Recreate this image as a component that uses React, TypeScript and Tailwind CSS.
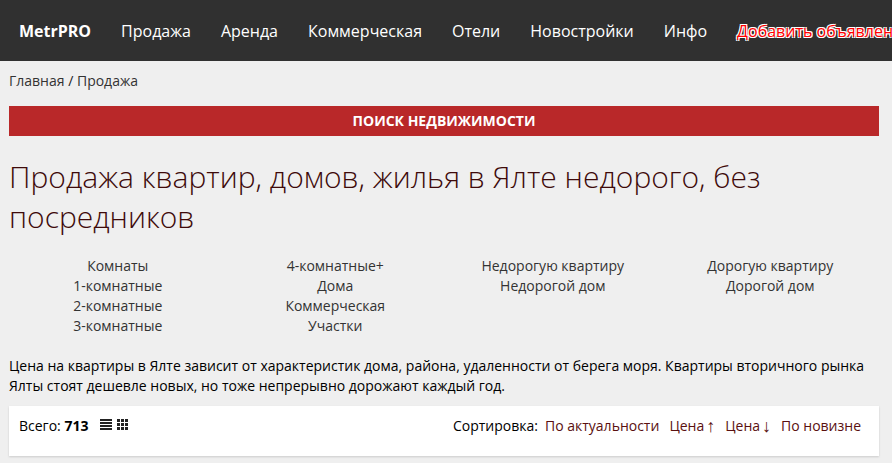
const navItems = ["Продажа", "Аренда", "Коммерческая", "Отели", "Новостройки", "Инфо"];

const categories = [
  ["Комнаты", "1-комнатные", "2-комнатные", "3-комнатные"],
  ["4-комнатные+", "Дома", "Коммерческая", "Участки"],
  ["Недорогую квартиру", "Недорогой дом"],
  ["Дорогую квартиру", "Дорогой дом"],
];

const sortOptions = [
  { id: "actual", label: "По актуальности", arrow: "" },
  { id: "price-up", label: "Цена", arrow: "↑" },
  { id: "price-down", label: "Цена", arrow: "↓" },
  { id: "new", label: "По новизне", arrow: "" },
];

function ListIcon() {
  return (
    <svg width="12" height="11" viewBox="0 0 12 11" fill="#222" shapeRendering="crispEdges" aria-hidden="true">
      {[0, 3, 6, 9].map((y) => (
        <rect key={y} x="0" y={y} width="12" height="2" />
      ))}
    </svg>
  );
}

function GridIcon() {
  return (
    <svg width="11" height="11" viewBox="0 0 11 11" fill="#222" shapeRendering="crispEdges" aria-hidden="true">
      {[0, 4, 8].map((y) => [0, 4, 8].map((x) => <rect key={`${x}-${y}`} x={x} y={y} width="3" height="3" />))}
    </svg>
  );
}

export default function App() {
  return (
    <div className="min-h-screen overflow-x-hidden bg-[#efefef] font-['Open_Sans','Noto_Sans',sans-serif] text-sm leading-5 text-black">
      <header className="overflow-hidden bg-[#303030]">
        <nav className="flex h-[61px] items-center gap-[30px] pl-[19px] text-base whitespace-nowrap text-white">
          <a href="#" className="font-bold">MetrPRO</a>
          {navItems.map((item) => (
            <a key={item} href="#">{item}</a>
          ))}
          <a
            href="#"
            className="text-[#ff0000] [text-shadow:-1px_-1px_0_#fff,1px_-1px_0_#fff,-1px_1px_0_#fff,1px_1px_0_#fff]"
          >
            Добавить объявление
          </a>
        </nav>
      </header>

      <main className="pt-2.5 pr-[13px] pl-[9px]">
        <div className="text-[#222]">
          <a href="#" className="text-[#333]">Главная</a> / <a href="#" className="text-[#333]">Продажа</a>
        </div>

        <button type="button" className="mt-[15px] block h-[30px] w-full bg-[#b92829] text-center font-bold text-white">
          ПОИСК НЕДВИЖИМОСТИ
        </button>

        <h1 className="mt-[21px] text-[30px] leading-10 font-light text-[#3e0a0a]">
          Продажа квартир, домов, жилья в Ялте недорого, без посредников
        </h1>

        <div className="mt-[19px] grid grid-cols-4 text-center text-[#333]">
          {categories.map((column) => (
            <ul key={column[0]}>
              {column.map((label) => (
                <li key={label}>
                  <a href="#">{label}</a>
                </li>
              ))}
            </ul>
          ))}
        </div>

        <p className="mt-5">
          Цена на квартиры в Ялте зависит от характеристик дома, района, удаленности от берега моря. Квартиры вторичного
          рынка Ялты стоят дешевле новых, но тоже непрерывно дорожают каждый год.
        </p>

        <section className="mt-2.5 flex items-start justify-between bg-white px-2.5 pt-2.5 pb-5 shadow-[0_1px_2px_rgba(0,0,0,0.15)]">
          <div className="flex items-start">
            <span>
              Всего: <b>713</b>
            </span>
            <div className="ml-3 flex gap-[5px] pt-[3px]">
              <button type="button" aria-label="Список">
                <ListIcon />
              </button>
              <button type="button" aria-label="Сетка">
                <GridIcon />
              </button>
            </div>
          </div>
          <div className="flex pr-2">
            <span className="mr-[7px]">Сортировка:</span>
            <div className="flex gap-[10px] text-[#5a1010]">
              {sortOptions.map(({ id, label, arrow }) => (
                <a key={id} href="#" className="flex gap-0.5">
                  {label}
                  {arrow && <span className="font-['Liberation_Sans',sans-serif] text-lg leading-5">{arrow}</span>}
                </a>
              ))}
            </div>
          </div>
        </section>
      </main>
    </div>
  );
}
